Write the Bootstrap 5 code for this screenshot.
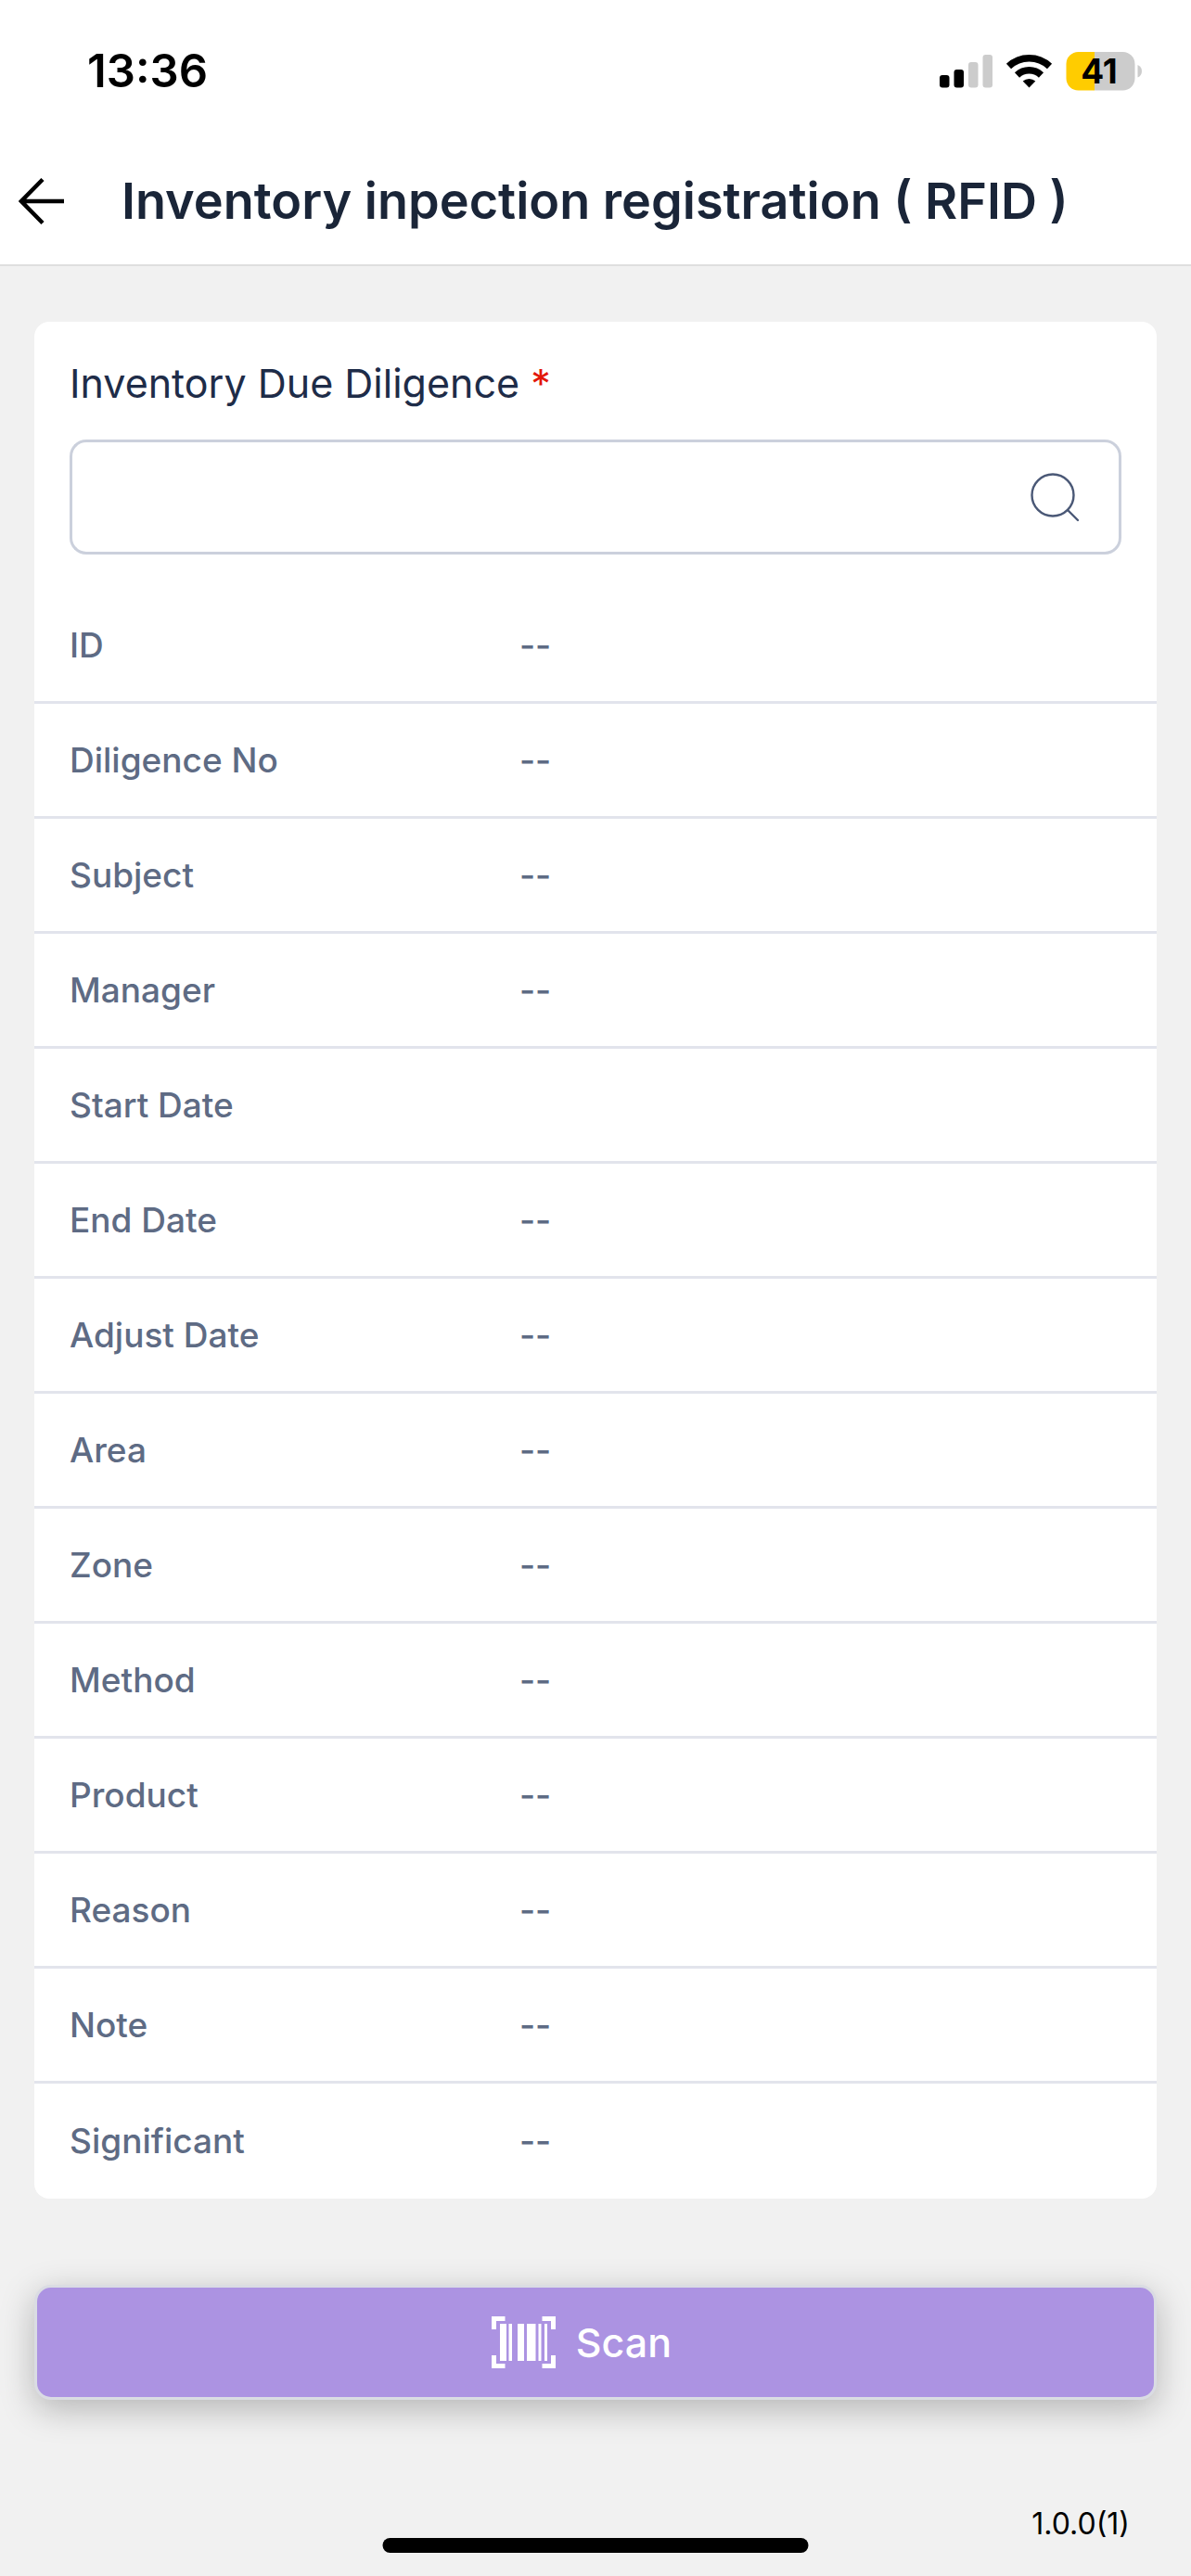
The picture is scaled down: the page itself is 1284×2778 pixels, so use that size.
<!DOCTYPE html>
<html lang="en">
<head>
<meta charset="utf-8">
<meta name="viewport" content="width=device-width, initial-scale=1">
<title>Inventory inpection registration ( RFID )</title>
<link href="https://cdn.jsdelivr.net/npm/bootstrap@5.3.0/dist/css/bootstrap.min.css" rel="stylesheet">
<style>
  body { font-family: Inter, "Liberation Sans", sans-serif; background: #f1f1f1; color: #000; }
  .status-bar { height: 154px; padding: 0 52px 0 94px; }
  .clock { font-size: 49px; line-height: 58px; font-weight: 600; }
  .app-bar { height: 133px; padding: 0 20px 6px; gap: 61px; border-bottom: 2px solid #dfdfdf; }
  .app-title { font-size: 54px; line-height: 64px; font-weight: 600; color: #1a2538; }
  .page-body { padding: 60px 37px 0; }
  .form-card { border: 0; border-radius: 16px; }
  .search-field { padding: 38px 38px 37px; }
  .field-label { font-size: 43px; line-height: 56px; color: #1e2c48; margin-bottom: 33px; }
  .required-star { color: #e3170a; }
  .search-box { height: 124px; }
  .search-box .form-control, .search-box .btn { border: 3px solid #cbd0dc; border-radius: 18px; font-size: 38px; }
  .search-box .form-control { border-right: 0; color: #1e2c48; }
  .search-box .btn { border-left: 0; padding: 0 42px; background: #fff; }
  .detail-row { height: 124px; padding: 0 38px; border-bottom: 3px solid #e2e4ec; font-size: 37px; line-height: 46px; color: #5e6b84; }
  .detail-row:last-child { border-bottom: 0; }
  .detail-row dt { flex: 0 0 485px; max-width: 43%; font-weight: 500; }
  .detail-row dd { font-weight: 500; }
  .scan-btn { height: 124px; margin-top: 93px; padding: 0 36px 0 6px; border: 3px solid #dadce3; border-radius: 18px; background: #ac93e2; color: #fff; font-size: 43px; font-weight: 500; gap: 22px; box-shadow: 0 10px 36px rgba(0,0,0,.25); }
  .scan-btn:hover { background: #9d82d8; color: #fff; }
  .app-version { padding: 0 66px 37px; font-size: 32px; line-height: 38px; }
  .home-bar { width: 459px; height: 16px; bottom: 25px; background: #000; }
</style>
</head>
<body class="d-flex flex-column min-vh-100">
<div class="status-bar bg-white d-flex align-items-center justify-content-between">
  <span class="clock">13:36</span>
  <svg width="220" height="44" viewBox="1012 55 220 44" role="img" aria-label="Signal, Wi-Fi, battery 41 percent">
    <rect x="1013" y="81" width="10.500" height="13.500" rx="3"/>
    <rect x="1028.500" y="75" width="10.500" height="19.500" rx="3"/>
    <rect x="1044" y="67" width="10.500" height="27.500" rx="3" fill="#ccc"/>
    <rect x="1059.500" y="59" width="10.500" height="35.500" rx="3" fill="#ccc"/>
    <g fill="none" stroke="#000" stroke-width="7.500">
      <path d="M1087.500 71.500a32 32 0 0 1 44 0"/>
      <path d="M1096.500 81a19 19 0 0 1 26 0"/>
    </g>
    <path d="M1109.500 94.500l-6.800-6.900a10 10 0 0 1 13.600 0z"/>
    <path d="M1180 56h-17.500a13 13 0 0 0-13 13v15.500a13 13 0 0 0 13 13H1180z" fill="#fc0"/>
    <path d="M1180 56h30.500a13 13 0 0 1 13 13v15.500a13 13 0 0 1-13 13H1180z" fill="#ccc"/>
    <path d="M1226.500 70q4.500 2 4.500 6.800t-4.500 6.800z" fill="#ccc"/>
    <text x="1185" y="90" text-anchor="middle" font-size="37" font-weight="700">41</text>
  </svg>
</div>
<nav class="app-bar bg-white d-flex align-items-center">
  <a href="#" class="d-flex text-black" aria-label="Back">
    <svg width="50" height="52" viewBox="0 0 50 52" fill="none" stroke="currentColor" stroke-width="4.500"><path d="M49 26H3M26 2.500L3 26l23 23.500"/></svg>
  </a>
  <h1 class="app-title mb-0 text-nowrap">Inventory inpection registration ( RFID )</h1>
</nav>
<main class="page-body flex-grow-1">
  <section class="card form-card">
    <div class="search-field">
      <label class="field-label d-block" for="diligence">Inventory Due Diligence <span class="required-star">*</span></label>
      <div class="input-group search-box">
        <input id="diligence" type="text" class="form-control" required>
        <button type="button" class="btn d-flex align-items-center" aria-label="Search">
          <svg width="54" height="54" viewBox="0 0 54 54" fill="none" stroke="#4a5876" stroke-width="2.400" stroke-linecap="round"><circle cx="25" cy="25" r="22.500"/><path d="M41.500 41.500L52 52"/></svg>
        </button>
      </div>
    </div>
    <dl class="mb-0">
      <div class="detail-row d-flex align-items-center"><dt>ID</dt><dd class="mb-0">--</dd></div>
      <div class="detail-row d-flex align-items-center"><dt>Diligence No</dt><dd class="mb-0">--</dd></div>
      <div class="detail-row d-flex align-items-center"><dt>Subject</dt><dd class="mb-0">--</dd></div>
      <div class="detail-row d-flex align-items-center"><dt>Manager</dt><dd class="mb-0">--</dd></div>
      <div class="detail-row d-flex align-items-center"><dt>Start Date</dt><dd class="mb-0"></dd></div>
      <div class="detail-row d-flex align-items-center"><dt>End Date</dt><dd class="mb-0">--</dd></div>
      <div class="detail-row d-flex align-items-center"><dt>Adjust Date</dt><dd class="mb-0">--</dd></div>
      <div class="detail-row d-flex align-items-center"><dt>Area</dt><dd class="mb-0">--</dd></div>
      <div class="detail-row d-flex align-items-center"><dt>Zone</dt><dd class="mb-0">--</dd></div>
      <div class="detail-row d-flex align-items-center"><dt>Method</dt><dd class="mb-0">--</dd></div>
      <div class="detail-row d-flex align-items-center"><dt>Product</dt><dd class="mb-0">--</dd></div>
      <div class="detail-row d-flex align-items-center"><dt>Reason</dt><dd class="mb-0">--</dd></div>
      <div class="detail-row d-flex align-items-center"><dt>Note</dt><dd class="mb-0">--</dd></div>
      <div class="detail-row d-flex align-items-center"><dt>Significant</dt><dd class="mb-0">--</dd></div>
    </dl>
  </section>
  <button type="button" class="btn scan-btn w-100 d-flex align-items-center justify-content-center">
    <svg width="69" height="56" viewBox="0 0 69 56" aria-hidden="true">
      <path d="M2.500 14V2.500h12M54.500 2.500h12V14M2.500 42v11.500h12M54.500 53.500h12V42" fill="none" stroke="#fff" stroke-width="5"/>
      <path d="M9 8h7v40H9zM18.500 8h3.500v40h-3.500zM28 8h7v40h-7zM38 8h9.500v40H38zM50.500 8h3v40h-3zM57 8h3v40h-3z" fill="#fff"/>
    </svg>
    <span>Scan</span>
  </button>
</main>
<footer class="app-version text-end">1.0.0(1)</footer>
<div class="home-bar rounded-pill position-fixed start-50 translate-middle-x"></div>
<script src="https://cdn.jsdelivr.net/npm/bootstrap@5.3.0/dist/js/bootstrap.bundle.min.js"></script>
</body>
</html>
